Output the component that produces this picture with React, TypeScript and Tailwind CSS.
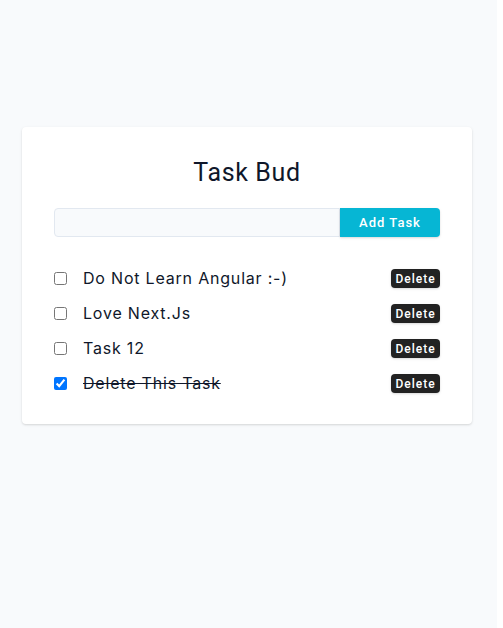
import { useState, type FormEvent } from 'react';

type Task = { id: number; name: string; done: boolean };

const initialTasks: Task[] = [
  { id: 1, name: 'do not learn angular :-)', done: false },
  { id: 2, name: 'love next.js', done: false },
  { id: 3, name: 'task 12', done: false },
  { id: 4, name: 'delete this task', done: true },
];

export default function App() {
  const [tasks, setTasks] = useState(initialTasks);
  const [name, setName] = useState('');

  const addTask = (event: FormEvent) => {
    event.preventDefault();
    if (!name.trim()) return;
    setTasks([...tasks, { id: Date.now(), name, done: false }]);
    setName('');
  };

  const toggleTask = (id: number) =>
    setTasks(tasks.map((t) => (t.id === id ? { ...t, done: !t.done } : t)));

  return (
    <div className="mr-1.5 min-h-screen bg-[#f8fafc] pt-[127px] pr-[25px] pl-[22px] font-['Inter',sans-serif] text-[#0f172a]">
      <main className="mx-auto max-w-[500px] rounded bg-white px-8 pt-8 pb-[31px] shadow-[0_1px_3px_0_rgba(0,0,0,0.1),0_1px_2px_0_rgba(0,0,0,0.06)]">
        <h1 className="mb-[22px] text-center font-['Roboto',sans-serif] text-[25px] leading-[27px] font-normal tracking-wide">
          Task Bud
        </h1>
        <form onSubmit={addTask} className="flex h-[29px]">
          <input
            type="text"
            aria-label="New task"
            value={name}
            onChange={(e) => setName(e.target.value)}
            className="min-w-0 flex-1 rounded-l border border-[#e2e8f0] bg-[#f8fafc] px-2 text-sm outline-none"
          />
          <button
            type="submit"
            className="w-[100px] rounded-r bg-[#06b6d4] font-['Roboto',sans-serif] text-[13px] font-medium tracking-[1px] text-white shadow-[0_1px_3px_0_rgba(0,0,0,0.1),0_1px_2px_0_rgba(0,0,0,0.06)]"
          >
            Add Task
          </button>
        </form>
        <ul className="mt-8 flex flex-col gap-4">
          {tasks.map((task) => (
            <li key={task.id} className="flex h-[19px] items-center justify-between">
              <label className="flex items-center gap-4">
                <input
                  type="checkbox"
                  checked={task.done}
                  onChange={() => toggleTask(task.id)}
                  className="size-[13px] accent-[#0075ff]"
                />
                <span
                  className={`text-base leading-[19px] tracking-wider capitalize ${task.done ? 'line-through' : ''}`}
                >
                  {task.name}
                </span>
              </label>
              <button
                type="button"
                onClick={() => setTasks(tasks.filter((t) => t.id !== task.id))}
                className="h-[19px] min-w-[49px] rounded bg-[#222] px-1 font-['Roboto',sans-serif] text-xs font-medium tracking-[1px] text-white shadow-[0_1px_3px_0_rgba(0,0,0,0.1),0_1px_2px_0_rgba(0,0,0,0.06)]"
              >
                Delete
              </button>
            </li>
          ))}
        </ul>
      </main>
    </div>
  );
}
